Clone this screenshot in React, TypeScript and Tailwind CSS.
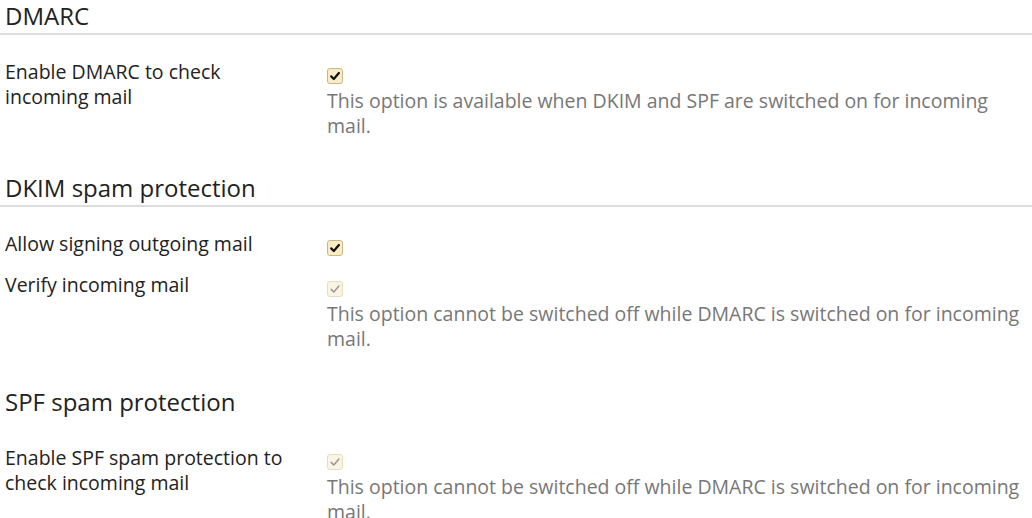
function Check({ disabled }: { disabled?: boolean }) {
  return (
    <span
      className={
        disabled
          ? "flex w-[16px] h-[16px] items-center justify-center rounded-[3px] border border-[#e8dcc0] bg-[#fcf4e2]"
          : "flex w-[16px] h-[16px] items-center justify-center rounded-[3px] border border-[#c9b68a] bg-[#fcecc4]"
      }
    >
      <svg width="12" height="12" viewBox="0 0 12 12">
        <path
          d="M2.2 6.4 L4.8 9 L9.9 3"
          fill="none"
          stroke={disabled ? "#9a9a9a" : "#111"}
          strokeWidth={disabled ? 1.6 : 2.2}
          strokeLinecap="round"
          strokeLinejoin="round"
        />
      </svg>
    </span>
  )
}

function Heading({ title, line = true }: { title: string; line?: boolean }) {
  return (
    <h2
      className={
        "text-[24px] leading-[32px] pb-[1px] border-b-2 text-[#222] " +
        (line ? "border-[#dddddd]" : "border-transparent")
      }
    >
      <span className="pl-[5px]">{title}</span>
    </h2>
  )
}

function Row({
  label,
  disabled,
  hint,
}: {
  label: string
  disabled?: boolean
  hint?: string
}) {
  return (
    <div className="flex pl-[5px]">
      <div className="w-[322px] shrink-0 pr-[30px] text-[#222]">{label}</div>
      <div className="flex-1 min-w-0">
        <div className={hint ? "h-[29px] pt-[9px]" : "pt-[9px]"}>
          <Check disabled={disabled} />
        </div>
        {hint && <div className="text-[#777]">{hint}</div>}
      </div>
    </div>
  )
}

export default function App() {
  return (
    <div className="w-[1032px] h-[518px] overflow-hidden bg-white font-['Open_Sans',sans-serif] text-[19.5px] leading-[25px]">
      <Heading title="DMARC" />
      <div className="mt-[24px]">
        <Row
          label="Enable DMARC to check incoming mail"
          hint="This option is available when DKIM and SPF are switched on for incoming mail."
        />
      </div>

      <div className="mt-[34px]">
        <Heading title="DKIM spam protection" />
      </div>
      <div className="mt-[24px] flex flex-col gap-[16px]">
        <Row label="Allow signing outgoing mail" />
        <Row
          label="Verify incoming mail"
          disabled
          hint="This option cannot be switched off while DMARC is switched on for incoming mail."
        />
      </div>

      <div className="mt-[35px]">
        <Heading title="SPF spam protection" line={false} />
      </div>
      <div className="mt-[24px]">
        <Row
          label="Enable SPF spam protection to check incoming mail"
          disabled
          hint="This option cannot be switched off while DMARC is switched on for incoming mail."
        />
      </div>
    </div>
  )
}
